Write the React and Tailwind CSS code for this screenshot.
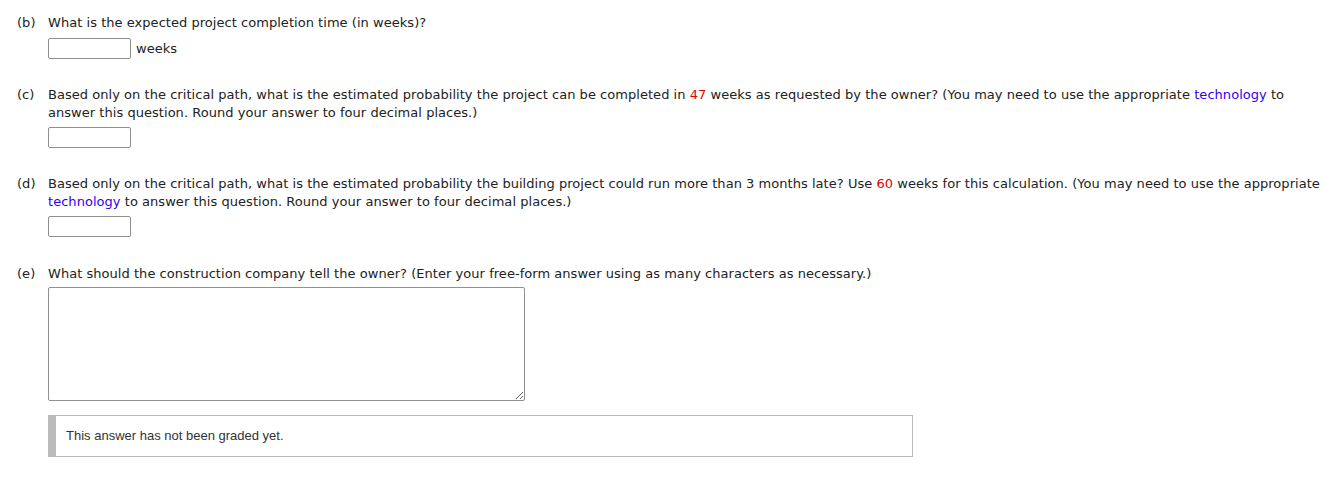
export default function App() {
  const input = "block w-[83px] h-[21px] border border-[#8f8f8f] rounded-[2px] bg-white";
  return (
    <div className="min-h-screen bg-white text-[13px] leading-[18px] tracking-[0.04px] text-[#222]" style={{ fontFamily: '"DejaVu Sans", Verdana, sans-serif' }}>
      <div className="pl-[17px] pr-[4px] pt-[14px]">
        {/* (b) */}
        <div className="flex">
          <span className="w-[31px] shrink-0">(b)</span>
          <div>
            <p>What is the expected project completion time (in weeks)?</p>
            <div className="flex items-center gap-[5px] mt-[6px]">
              <input className={input} />
              <span>weeks</span>
            </div>
          </div>
        </div>

        {/* (c) */}
        <div className="flex mt-[27px]">
          <span className="w-[31px] shrink-0">(c)</span>
          <div>
            <p>
              Based only on the critical path, what is the estimated probability the project can be completed in{" "}
              <span className="text-[#e60000]">47</span> weeks as requested by the owner? (You may need to use the appropriate{" "}
              <span className="text-[#3300ee]">technology</span> to answer this question. Round your answer to four decimal places.)
            </p>
            <div className="mt-[5px]">
              <input className={input} />
            </div>
          </div>
        </div>

        {/* (d) */}
        <div className="flex mt-[27px]">
          <span className="w-[31px] shrink-0">(d)</span>
          <div>
            <p>
              Based only on the critical path, what is the estimated probability the building project could run more than 3 months late? Use{" "}
              <span className="text-[#e60000]">60</span> weeks for this calculation. (You may need to use the appropriate{" "}
              <span className="text-[#3300ee]">technology</span> to answer this question. Round your answer to four decimal places.)
            </p>
            <div className="mt-[5px]">
              <input className={input} />
            </div>
          </div>
        </div>

        {/* (e) */}
        <div className="flex mt-[28px]">
          <span className="w-[31px] shrink-0">(e)</span>
          <div>
            <p>What should the construction company tell the owner? (Enter your free-form answer using as many characters as necessary.)</p>
            <textarea className="block mt-[4px] w-[477px] h-[114px] border border-[#8f8f8f] rounded-[2px] bg-white" />
            <div className="mt-[14px] w-[865px] h-[42px] flex border border-[#bbb] border-l-[8px] border-l-[#bbb] items-center pl-[10px] text-[13px] tracking-normal text-[#333]" style={{ fontFamily: '"Liberation Sans", Arial, sans-serif' }}>
              This answer has not been graded yet.
            </div>
          </div>
        </div>
      </div>
    </div>
  );
}
